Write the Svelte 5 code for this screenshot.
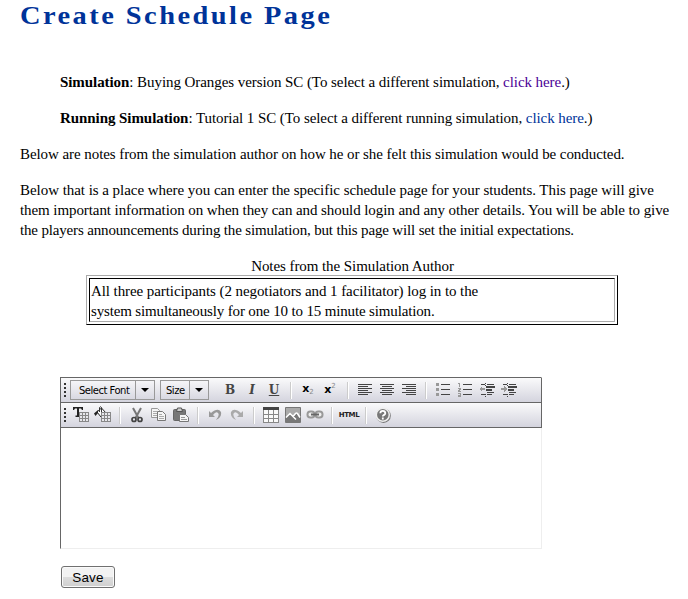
<script>
  const rows = [0, 2, 4, 6, 8, 10];
  const notes = [
    ['All three participants (2 negotiators and 1 facilitator) log in to the', -0.08],
    ['system simultaneously for one 10 to 15 minute simulation.', -0.15]
  ];
  const body = [
    ['Below that is a place where you can enter the specific schedule page for your students. This page will give', -0.045],
    ['them important information on when they can and should login and any other details. You will be able to give', -0.08],
    ['the players announcements during the simulation, but this page will set the initial expectations.', -0.16]
  ];
</script>

{#snippet sep(w = 12)}<span class="sep" style:width="{w}px"><i></i></span>{/snippet}
{#snippet combo(label, w)}
  <span class="combo" style:width="{w}px"><span class="lbl">{label}</span><span class="arr"><svg width="8" height="4"><path d="M0 0H8L4 4Z" fill="#000" /></svg></span></span>
{/snippet}
{#snippet align(kind)}
  <button class="tool" aria-label={kind}><svg width="16" height="12" shape-rendering="crispEdges">
    {#each rows as y, i}
      {@const short = i % 2 === 1}
      <path d="M{short ? (kind === 'left' ? 1 : kind === 'right' ? 5 : 3) : 1} {y + 0.5}h{short ? 10 : 14}" stroke="#444" />
    {/each}
  </svg></button>
{/snippet}
{#snippet list(numbered)}
  <button class="tool" aria-label="list"><svg width="16" height="14" shape-rendering="crispEdges">
    <path d="M6 1.500h9M6 6.500h9M6 11.500h9" stroke="#444" />
    {#if numbered}
      <path d="M1 .5h1.500V4M1 5.500h2.500v1h-1v1h-1v1h2.500M1 10.500h2.500v3H1M1 12h2" fill="none" stroke="#999" />
    {:else}
      <path d="M1 0h3v3H1zM1 5h3v3H1zM1 10h3v3H1z" fill="#999" />
    {/if}
  </svg></button>
{/snippet}
{#snippet indent(out)}
  <button class="tool" aria-label="indent"><svg width="16" height="16" shape-rendering="crispEdges">
    <path d="M2 2.500h4M8 2.500h7M2 12.500h4M8 12.500h5M8 10.500h7" stroke="#444" />
    <path d="M7 4h9v2H7zM7 7h6v2H7z" fill="#444" />
    <path d="M6.500 1v3M6.500 12v3" stroke="#444" stroke-dasharray="1 1" />
    {#if out}<path d="M0 7l3-3v2h3v2H3v2z" fill="#999" />{:else}<path d="M6 7L3 4v2H0v2h3v2z" fill="#999" />{/if}
  </svg></button>
{/snippet}
{#snippet miniGrid()}
  <g shape-rendering="crispEdges"><path d="M7 6h10v10H7z" fill="#888" /><path d="M8 7h2v2H8zM11 7h2v2h-2zM14 7h2v2h-2zM8 10h2v2H8zM11 10h2v2h-2zM14 10h2v2h-2zM8 13h2v2H8zM11 13h2v2h-2zM14 13h2v2h-2z" fill="#e8e8ec" /></g>
{/snippet}

<main>
  <h1>Create Schedule Page</h1>
  <div class="choices">
    <p><b>Simulation</b>: Buying Oranges version SC (To select a different simulation, <a class="visited" href="#sim">click here</a>.)</p>
    <p><b>Running Simulation</b>: Tutorial 1 SC (To select a different running simulation, <a href="#run">click here</a>.)</p>
  </div>
  <p>Below are notes from the simulation author on how he or she felt this simulation would be conducted.</p>
  <p class="body">{#each body as [line, spacing]}<span style:letter-spacing="{spacing}px">{line}</span>{/each}</p>
  <div class="caption">Notes from the Simulation Author</div>
  <div class="notes"><div>{#each notes as [line, spacing]}<span style:letter-spacing="{spacing}px">{line}</span>{/each}</div></div>

  <section class="editor">
    <div class="bar">
      <span class="grip"></span>
      {@render combo('Select Font', 85)}
      <span class="gap"></span>
      {@render combo('Size', 49)}
      <span class="gap2"></span>
      <button class="tool fmt"><b>B</b></button>
      <button class="tool fmt"><b><em>I</em></b></button>
      <button class="tool fmt"><b class="u">U</b></button>
      {@render sep()}
      <button class="tool script">x<small class="sub">2</small></button>
      <button class="tool script low">x<small class="sup">2</small></button>
      {@render sep(13)}
      {@render align('left')}
      {@render align('center')}
      {@render align('right')}
      {@render sep()}
      {@render list(false)}
      {@render list(true)}
      {@render indent(true)}
      {@render indent(false)}
    </div>
    <div class="bar">
      <span class="grip"></span>
      <button class="tool" aria-label="text colour"><svg width="18" height="18">
        <path d="M1 1h10v3h-1L9 2.500H7v7h1.500V11h-5V9.500H5v-7H3L2 4H1z" fill="#222" />
        {@render miniGrid()}
      </svg></button>
      <button class="tool" aria-label="fill colour"><svg width="18" height="18">
        <path d="M3 6l4.500-4L12 7l-5 4z" fill="#fff" stroke="#222" /><path d="M5.500 6V1.500q1-1.500 2 0V6" fill="none" stroke="#333" /><path d="M4 4L0 7.500 1.500 10 4 7z" fill="#222" />
        {@render miniGrid()}
      </svg></button>
      {@render sep()}
      <button class="tool" aria-label="cut"><svg width="14" height="16">
        <path d="M3 1l5.500 10M11 1L5.500 11" stroke="#777" stroke-width="2" /><circle cx="4" cy="12.500" r="2" fill="none" stroke="#444" stroke-width="1.700" /><circle cx="10" cy="12.500" r="2" fill="none" stroke="#444" stroke-width="1.700" />
      </svg></button>
      <button class="tool" aria-label="copy"><svg width="16" height="16">
        <path d="M.5 1.500h6l2 2v7h-8z" fill="#f5f5f5" stroke="#999" /><path d="M6.500 4.500h5l3 3v6h-8z" fill="#f5f5f5" stroke="#777" /><path d="M2 4.500h4M2 6.500h4M2 8.500h4M8 7.500h3M8 9.500h5M8 11.500h5" stroke="#aaa" />
      </svg></button>
      <button class="tool" aria-label="paste"><svg width="18" height="16">
        <rect x="1.500" y="2.500" width="12" height="11" rx="1" fill="#777" stroke="#666" /><path d="M4.500 4.500h6L9.500 1h-4z" fill="#ccc" stroke="#555" /><path d="M7.500 7.500h6l3 3v4h-9z" fill="#f5f5f5" stroke="#777" /><path d="M9 10.500h4M9 12.500h6" stroke="#999" />
      </svg></button>
      {@render sep()}
      <button class="tool" aria-label="undo"><svg width="14" height="14"><path d="M1 3v6h6L5 7q3-4 5-2 2 2-2 7 6-3 5-8-3-5-10 1z" fill="#999" /></svg></button>
      <button class="tool" aria-label="redo"><svg width="14" height="14"><path d="M13 3v6H7l2-2Q6 3 4 5q-2 2 2 7Q0 9 1 4q3-5 10 1z" fill="#aaa" /></svg></button>
      {@render sep()}
      <button class="tool" aria-label="table"><svg width="16" height="16" shape-rendering="crispEdges"><path d="M.5.5h15v15H.5zM.5 7.500h15M.5 11.500h15M5.500 3v13M10.500 3v13" fill="#fafafa" stroke="#888" /><path d="M0 0h16v3H0z" fill="#444" /></svg></button>
      <button class="tool" aria-label="image"><svg width="16" height="16"><path d="M.5.5h15v15H.5z" fill="#aaa" stroke="#777" /><path d="M1 11l4-4 3 3 3-4 4 5v4H1z" fill="#777" /><path d="M1 10.500l4-4 6 6M8 9.500l2.500-3q1-1 2 0l2.500 4" stroke="#fff" stroke-width="1.500" fill="none" /></svg></button>
      <button class="tool" aria-label="link"><svg width="18" height="16"><rect x="1.500" y="4.500" width="7" height="6" rx="2.800" fill="#eee" stroke="#999" stroke-width="2" /><rect x="9.500" y="4.500" width="7" height="6" rx="2.800" fill="#eee" stroke="#999" stroke-width="2" /><path d="M5 7.500h8" stroke="#666" stroke-width="2" /></svg></button>
      {@render sep()}
      <button class="tool html">HTML</button>
      {@render sep()}
      <button class="tool" aria-label="help"><svg width="18" height="18"><circle cx="9.500" cy="9.700" r="7.300" fill="#777" /><circle cx="8.800" cy="8.800" r="6.500" fill="#777" stroke="#eee" stroke-width="1.500" /><path d="M6.300 7.300q0-2.500 2.500-2.500t2.500 2.500q0 1-1.500 1.800-1 .6-1 1.400M8.800 11.500v2" fill="none" stroke="#fff" stroke-width="1.800" /></svg></button>
    </div>
    <div class="area"></div>
  </section>
  <button class="save">Save</button>
</main>

<style>
  :global(body) { margin: 0; background: #fff; overflow: hidden; }
  main { width: 688px; height: 599px; box-sizing: border-box; padding-left: 20px; overflow: hidden; font: 15px/20px 'Liberation Serif', 'Times New Roman', serif; letter-spacing: -.07px; color: #000; white-space: nowrap; }
  h1 { margin: 0; width: max-content; height: 72px; font: bold 25.5px/32px 'Liberation Serif', serif; letter-spacing: 2.2px; color: #039; transform: scaleX(1.115); transform-origin: 0 0; }
  .choices { padding-left: 40px; }
  p { margin: 0 0 16px; }
  a { color: #039; text-decoration: none; }
  a.visited { color: #4b0096; }
  .body span, .notes span { display: block; width: max-content; }
  .caption { width: 665px; text-align: center; }
  .notes { box-sizing: border-box; width: 532px; height: 50px; margin: -1px 0 0 66px; padding: 2px; border: 1px solid; border-color: #aaa #000 #000 #aaa; }
  .notes div { box-sizing: border-box; height: 44px; padding: 2px 1px; border: 1px solid; border-color: #000 #aaa #aaa #000; }
  .editor { box-sizing: border-box; width: 482px; height: 172px; margin: 52px 0 0 40px; border: 1px solid #666; border-right-color: #eee; border-bottom-color: #eee; letter-spacing: 0; }
  .bar { box-sizing: border-box; height: 25px; width: 481px; border-bottom: 1px solid #666; border-right: 1px solid #666; background: linear-gradient(#fafafb, #d4d4de); display: flex; align-items: center; }
  .grip { flex: none; width: 2px; height: 14px; margin: 0 4px 0 3px; background: repeating-linear-gradient(#333 0 2px, transparent 2px 4px); }
  .combo { flex: none; box-sizing: border-box; height: 20px; display: flex; border: 1px solid #999; color: #000; font: 10px/18px 'DejaVu Sans', sans-serif; }
  .lbl { flex: 1; letter-spacing: -.5px; padding: 1px 0 0 8px; }
  .combo + .gap + .combo .lbl { padding-left: 5px; }
  .arr { flex: none; width: 18px; border-left: 1px solid #999; display: flex; align-items: center; justify-content: center; }
  .gap { width: 5px; }
  .gap2 { width: 10px; }
  .tool { flex: none; width: 22px; height: 24px; padding: 0; border: 0; background: none; display: flex; align-items: center; justify-content: center; color: #444; }
  .fmt { font: 12px/20px 'DejaVu Serif', serif; }
  .u { text-decoration: underline; }
  .script { font: bold 11px/20px 'DejaVu Sans', sans-serif; color: #000; padding-bottom: 3px; }
  .script.low { padding-bottom: 0; }
  .script small { font-size: 7px; font-weight: normal; color: #888; }
  .sub { padding-top: 7px; }
  .sup { padding-bottom: 9px; }
  .html { font: bold 7px/20px 'DejaVu Sans', sans-serif; letter-spacing: -.4px; color: #222; }
  .sep { flex: none; display: flex; justify-content: center; }
  .sep i { width: 1px; height: 17px; background: #ccc; border-right: 1px solid #fff; }
  .save { display: block; box-sizing: border-box; width: 54px; height: 22px; margin: 17px 0 0 41px; padding: 0; border: 1px solid #707070; border-radius: 3px; background: linear-gradient(#f2f2f2 0 48%, #ddd 50%, #cfcfcf); font: 13.500px/19px 'Liberation Sans', Arial, sans-serif; letter-spacing: .2px; box-shadow: inset 0 0 0 1px #fafafa; color: #000; }
</style>
